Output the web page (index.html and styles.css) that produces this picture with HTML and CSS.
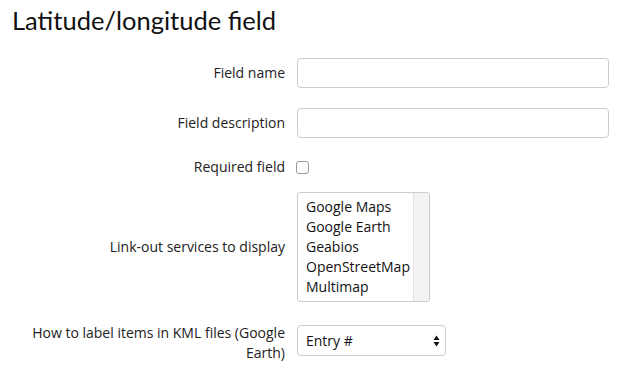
FILE: index.html
```html
<!DOCTYPE html>
<html>
<head>
<meta charset="utf-8">
<link rel="stylesheet" href="styles.css">
</head>
<body>
<div class="page">
  <h1 class="title">Latitude/longitude field</h1>
  <form class="form">
    <div class="row row-name">
      <label class="label">Field name</label>
      <input class="text-input" type="text">
    </div>
    <div class="row row-desc">
      <label class="label">Field description</label>
      <input class="text-input" type="text">
    </div>
    <div class="row row-req">
      <label class="label">Required field</label>
      <span class="checkbox"></span>
    </div>
    <div class="row row-links">
      <label class="label">Link-out services to display</label>
      <div class="listbox">
        <div class="list-items">
          <div class="list-item">Google Maps</div>
          <div class="list-item">Google Earth</div>
          <div class="list-item">Geabios</div>
          <div class="list-item">OpenStreetMap</div>
          <div class="list-item">Multimap</div>
        </div>
        <div class="list-scroll"></div>
      </div>
    </div>
    <div class="row row-kml">
      <label class="label label-top">How to label items in KML files (Google Earth)</label>
      <div class="dropdown">
        <span class="dropdown-text">Entry #</span>
        <svg class="dropdown-arrows" width="7" height="12" viewBox="0 0 7 12">
          <path d="M3.5 0.5 L6.5 5 L0.5 5 Z" fill="#111"/>
          <path d="M3.5 11.5 L6.5 7 L0.5 7 Z" fill="#111"/>
        </svg>
      </div>
    </div>
  </form>
</div>
</body>
</html>
```

FILE: styles.css
```css
html, body {
  margin: 0;
  padding: 0;
  background: #ffffff;
}

.page {
  padding: 5px 13px 0 12px;
  font-family: "Open Sans", "Liberation Sans", sans-serif;
  font-size: 14px;
  color: #333;
}

.title {
  margin: 0 0 23px 0;
  font-family: "Lato", "Noto Sans", sans-serif;
  font-weight: 400;
  font-size: 25.5px;
  line-height: 30px;
  color: #111;
}

.form {
  display: flex;
  flex-direction: column;
}

.row {
  display: flex;
  align-items: center;
  gap: 12px;
}

.row-desc { margin-top: 20px; }
.row-req { margin-top: 19px; }
.row-links { margin-top: 15px; }
.row-kml { margin-top: 21px; align-items: flex-start; }

.label {
  width: 273px;
  flex: none;
  text-align: right;
  line-height: 20px;
  color: #222;
}

.text-input {
  width: 312px;
  height: 30px;
  box-sizing: border-box;
  border: 1px solid #cccccc;
  border-radius: 4px;
  padding: 4px 8px;
  margin: 0;
  font: inherit;
}

.checkbox {
  display: block;
  width: 11px;
  height: 11px;
  border: 1px solid #9a9a9a;
  border-radius: 3px;
  margin-left: -1px;
  margin-top: 1px;
}

.row-req .label {
  height: 20px;
}

.listbox {
  display: flex;
  width: 133px;
  height: 110px;
  box-sizing: border-box;
  border: 1px solid #cccccc;
  border-radius: 3px;
  overflow: hidden;
}

.list-items {
  flex: 1;
  padding: 4px 0 4px 8px;
  color: #111;
}

.list-item {
  line-height: 20px;
  white-space: nowrap;
}

.list-scroll {
  width: 15px;
  flex: none;
  background: #f3f3f3;
  border-left: 1px solid #e2e2e2;
}

.dropdown {
  display: flex;
  align-items: center;
  justify-content: space-between;
  width: 149px;
  height: 31px;
  box-sizing: border-box;
  border: 1px solid #cccccc;
  border-radius: 4px;
  padding: 0 5px 0 8px;
  margin-top: 2px;
  color: #111;
}
```
